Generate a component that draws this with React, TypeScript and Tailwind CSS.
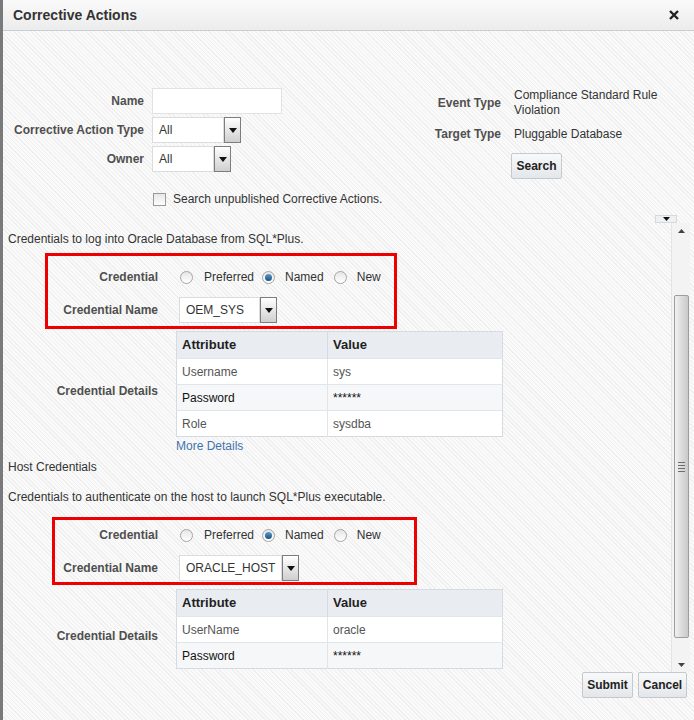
import React from 'react';

const Caret = () => (
  <svg width="8" height="5" viewBox="0 0 8 5">
    <path d="M0 0h8L4 5z" fill="#111" />
  </svg>
);

const Select = ({ value, width }: { value: string; width: number }) => (
  <div className="flex h-[26px] items-stretch" style={{ width }}>
    <div className="flex flex-1 items-center border border-[#dcdcdc] bg-white pl-[6px] text-[12px] text-[#333]">
      {value}
    </div>
    <div className="flex w-[17px] items-center justify-center border border-[#7d7d7d] bg-gradient-to-b from-[#ffffff] to-[#cfcfcf]">
      <Caret />
    </div>
  </div>
);

const Radio = ({ checked }: { checked?: boolean }) => (
  <span className="flex h-[13px] w-[13px] items-center justify-center rounded-full border border-[#a5a5a5] bg-gradient-to-b from-[#e6e6e6] to-[#ffffff]">
    {checked && <span className="h-[7px] w-[7px] rounded-full bg-gradient-to-b from-[#5b9bd0] to-[#1b4f80]" />}
  </span>
);

const Button = ({ label, className = '' }: { label: string; className?: string }) => (
  <button
    className={`flex h-[26px] items-center justify-center rounded-[2px] border border-[#c5c9ce] bg-gradient-to-b from-[#f8f9fa] to-[#e4e7ea] text-[12px] font-bold text-[#222] ${className}`}
  >
    {label}
  </button>
);

const CredentialBox = ({
  name,
  selectWidth,
  labelWidth,
  className,
}: {
  name: string;
  selectWidth: number;
  labelWidth: number;
  className: string;
}) => (
  <div className={`border-[3px] border-[#ee0000] ${className}`}>
    <div className="flex h-[20px] items-center">
      <span className="text-right text-[12px] font-bold text-[#4f4f4f]" style={{ width: labelWidth }}>
        Credential
      </span>
      <div className="ml-[22px] flex items-center text-[12px] text-[#333]">
        <Radio />
        <span className="ml-[11px] mr-[8px]">Preferred</span>
        <Radio checked />
        <span className="ml-[10px] mr-[10px]">Named</span>
        <Radio />
        <span className="ml-[10px]">New</span>
      </div>
    </div>
    <div className="mt-[10px] flex h-[26px] items-center">
      <span className="text-right text-[12px] font-bold text-[#4f4f4f]" style={{ width: labelWidth }}>
        Credential Name
      </span>
      <div className="ml-[21px]">
        <Select value={name} width={selectWidth} />
      </div>
    </div>
  </div>
);

const DetailsTable = ({ rows }: { rows: [string, string][] }) => (
  <div className="flex items-center">
    <span className="w-[155px] pt-[14px] text-right text-[12px] font-bold text-[#4f4f4f]">Credential Details</span>
    <table className="ml-[18px] w-[327px] border-collapse border border-[#d6dbe1] text-[12px] text-[#333]">
      <thead>
        <tr className="h-[27px] bg-[#e9ecf0]">
          <th className="w-[151px] border-r border-[#d6dbe1] pl-[5px] text-left text-[13px] font-bold text-[#1f1f1f]">
            Attribute
          </th>
          <th className="pl-[5px] text-left text-[13px] font-bold text-[#1f1f1f]">Value</th>
        </tr>
      </thead>
      <tbody>
        {rows.map(([a, v], i) => (
          <tr key={a} className={`h-[26px] border-t border-[#e1e5ea] ${i % 2 ? 'bg-[#f6f7f9]' : 'bg-white'}`}>
            <td className={`border-r border-[#e1e5ea] pl-[5px] ${i % 2 ? 'text-[#111]' : 'text-[#555]'}`}>{a}</td>
            <td className={`pl-[5px] ${i % 2 ? 'text-[#111]' : 'text-[#555]'}`}>{v}</td>
          </tr>
        ))}
      </tbody>
    </table>
  </div>
);

export default function App() {
  return (
    <div className="flex h-[720px] w-[694px] flex-col overflow-hidden border-l-[3px] border-[#7a7a7a] bg-[repeating-linear-gradient(45deg,#fafafa_0px,#fafafa_2px,#efefef_2px,#efefef_3px)] font-['Liberation_Sans',Arial,sans-serif] text-[#333]">
      {/* Title bar */}
      <div className="flex h-[31px] shrink-0 items-center justify-between border-b border-[#c9ced3] bg-gradient-to-b from-[#fafafa] to-[#ececec] pl-[10px] pr-[15px]">
        <span className="text-[14px] font-bold text-[#333]">Corrective Actions</span>
        <svg width="10" height="10" viewBox="0 0 10 10">
          <path d="M1 1L9 9M9 1L1 9" stroke="#222" strokeWidth="2.4" />
        </svg>
      </div>

      {/* Search form */}
      <div className="flex shrink-0 pt-[57px]">
        <div className="w-[397px]">
          <div className="flex h-[26px] items-center">
            <span className="w-[141px] text-right text-[12px] font-bold text-[#4f4f4f]">Name</span>
            <div className="ml-[8px] h-[26px] w-[130px] border border-[#e2e2e2] bg-white" />
          </div>
          <div className="mt-[3px] flex h-[26px] items-center">
            <span className="w-[141px] text-right text-[12px] font-bold text-[#4f4f4f]">Corrective Action Type</span>
            <div className="ml-[8px]">
              <Select value="All" width={89} />
            </div>
          </div>
          <div className="mt-[3px] flex h-[26px] items-center">
            <span className="w-[141px] text-right text-[12px] font-bold text-[#4f4f4f]">Owner</span>
            <div className="ml-[8px]">
              <Select value="All" width={79} />
            </div>
          </div>
          <div className="ml-[150px] mt-[18px] flex items-center">
            <span className="h-[13px] w-[13px] border border-[#9a9a9a] bg-gradient-to-b from-[#e8e8e8] to-[#fdfdfd]" />
            <span className="ml-[7px] text-[12px] text-[#333]">Search unpublished Corrective Actions.</span>
          </div>
        </div>
        <div>
          <div className="flex h-[30px] items-center">
            <span className="w-[101px] text-right text-[12px] font-bold text-[#4f4f4f]">Event Type</span>
            <span className="ml-[13px] w-[150px] text-[12px] leading-[15px] text-[#333]">
              Compliance Standard Rule Violation
            </span>
          </div>
          <div className="mt-[8px] flex h-[15px] items-center">
            <span className="w-[101px] text-right text-[12px] font-bold text-[#4f4f4f]">Target Type</span>
            <span className="ml-[13px] text-[12px] text-[#333]">Pluggable Database</span>
          </div>
          <Button label="Search" className="ml-[111px] mt-[12px] w-[51px]" />
        </div>
      </div>

      {/* Collapse toggle */}
      <div className="flex shrink-0 justify-end pr-[17px] pt-[7px]">
        <div className="flex h-[8px] w-[22px] items-center justify-center border border-[#d5d8dc] bg-[#eef0f2]">
          <svg width="7" height="4" viewBox="0 0 7 4">
            <path d="M0 0h7L3.5 4z" fill="#111" />
          </svg>
        </div>
      </div>

      {/* Scrollable credentials area */}
      <div className="mr-[4px] flex h-[449px] shrink-0">
        <div className="flex-1 overflow-hidden">
          <p className="pl-[5px] pt-[9px] text-[12px] leading-[15px] text-[#333]">
            Credentials to log into Oracle Database from SQL*Plus.
          </p>
          <CredentialBox
            name="OEM_SYS"
            selectWidth={98}
            labelWidth={110}
            className="ml-[42px] mt-[6px] h-[76px] w-[352px] pt-[11px]"
          />
          <div className="mt-[2px]">
            <DetailsTable
              rows={[
                ['Username', 'sys'],
                ['Password', '******'],
                ['Role', 'sysdba'],
              ]}
            />
          </div>
          <p className="ml-[173px] mt-[2px] text-[12px] leading-[15px] text-[#3f74ad]">More Details</p>
          <p className="mt-[6px] pl-[5px] text-[12px] leading-[15px] text-[#333]">Host Credentials</p>
          <p className="mt-[15px] pl-[5px] text-[12px] leading-[15px] text-[#333]">
            Credentials to authenticate on the host to launch SQL*Plus executable.
          </p>
          <CredentialBox
            name="ORACLE_HOST"
            selectWidth={120}
            labelWidth={103}
            className="ml-[49px] mt-[12px] h-[68px] w-[365px] pt-[5px]"
          />
          <div className="mt-[4px]">
            <DetailsTable
              rows={[
                ['UserName', 'oracle'],
                ['Password', '******'],
              ]}
            />
          </div>
        </div>

        {/* Scrollbar */}
        <div className="flex w-[19px] flex-col items-center border-l border-[#e4e4e4] bg-[#f3f3f3]">
          <svg className="mt-[6px]" width="7" height="4" viewBox="0 0 7 4">
            <path d="M3.5 0L7 4H0z" fill="#444" />
          </svg>
          <div className="mt-[62px] flex h-[343px] w-[15px] items-center justify-center rounded-[2px] border border-[#9d9d9d] bg-gradient-to-r from-[#f2f2f2] via-[#dcdcdc] to-[#c9c9c9]">
            <div className="flex w-[7px] flex-col gap-[2px]">
              <span className="h-px bg-[#6d6d6d]" />
              <span className="h-px bg-[#6d6d6d]" />
              <span className="h-px bg-[#6d6d6d]" />
              <span className="h-px bg-[#6d6d6d]" />
            </div>
          </div>
          <svg className="mt-[25px]" width="7" height="4" viewBox="0 0 7 4">
            <path d="M0 0h7L3.5 4z" fill="#444" />
          </svg>
        </div>
      </div>

      {/* Footer */}
      <div className="flex justify-end gap-[5px] pr-[7px]">
        <Button label="Submit" className="w-[51px]" />
        <Button label="Cancel" className="w-[49px]" />
      </div>
    </div>
  );
}
